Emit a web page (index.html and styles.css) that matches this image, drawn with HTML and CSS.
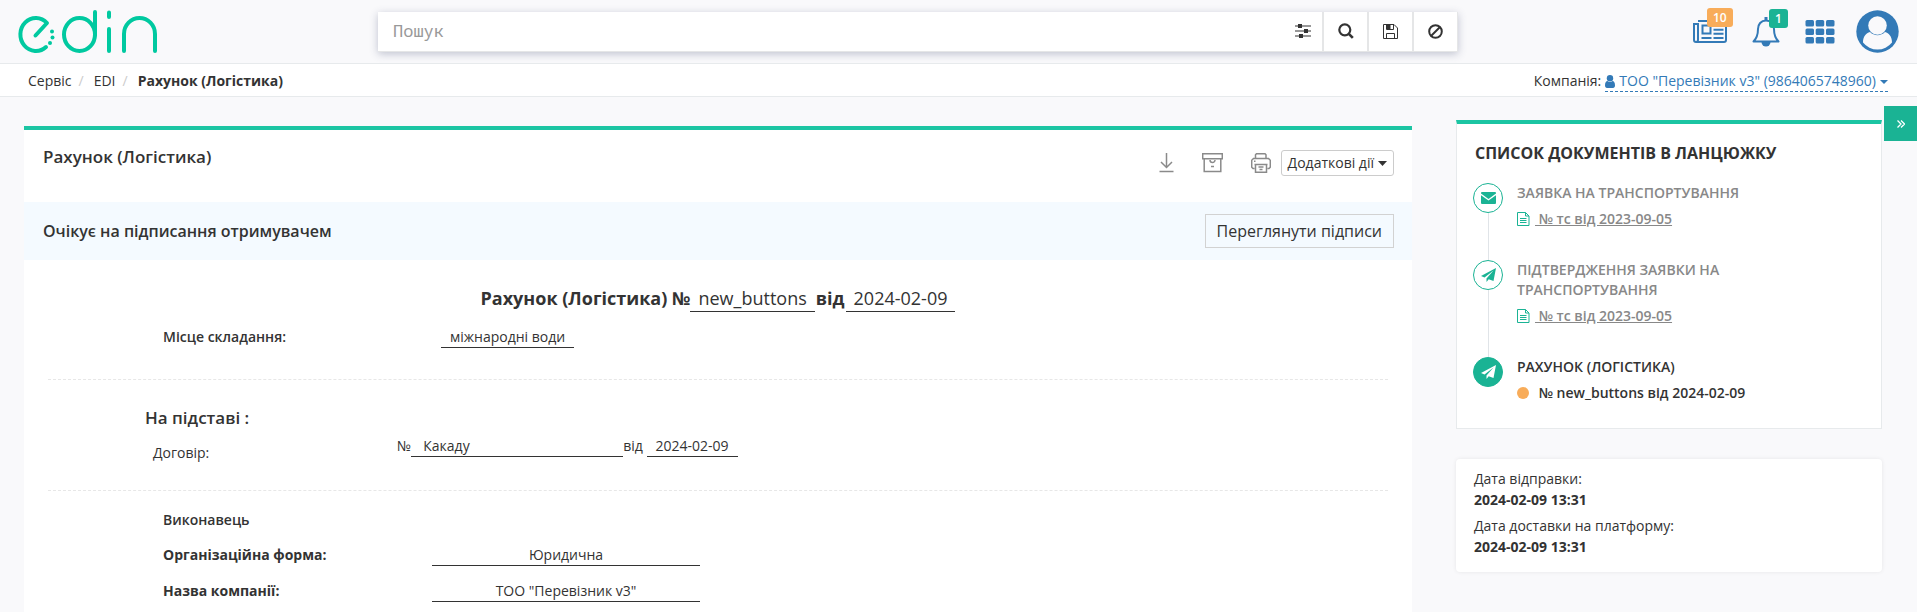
FILE: index.html
```html
<!DOCTYPE html>
<html lang="uk">
<head>
<meta charset="utf-8">
<meta name="viewport" content="width=device-width, initial-scale=1">
<title>Рахунок (Логістика)</title>
<link rel="stylesheet" href="styles.css">
</head>
<body>
<header class="topbar">
  <a class="logo" href="#" aria-label="edin">
    <svg width="140" height="44" viewBox="18 9 140 44" fill="none" stroke="#00c9a0" stroke-width="4" stroke-linecap="round" stroke-linejoin="round">
      <path d="M35.5 34.5 47 22A15.5 16.5 0 1 0 46 46"/>
      <ellipse cx="79.5" cy="33.5" rx="15.5" ry="16.5"/>
      <path d="M95 11v23M109 11.500v4.500M109 28v22M124 50V33a15.500 16 0 0 1 31 0v17"/>
      <g fill="#00c9a0" stroke="none"><circle cx="52" cy="30.500" r="2"/><circle cx="52.500" cy="36.500" r="2"/><circle cx="50" cy="42" r="2"/></g>
    </svg>
  </a>
  <form class="search">
    <input class="search-input" type="text" placeholder="Пошук" aria-label="Пошук">
    <button class="search-filter" type="button" aria-label="Фільтри">
      <svg width="16" height="14" viewBox="0 0 16 14" fill="#333"><path d="M0 1.500h16v1H0zM0 6.500h16v1H0zM0 11.500h16v1H0z"/><path d="M3 0h4v4H3zM9 5h4v4H9zM4 10h4v4H4z"/></svg>
    </button>
    <button class="search-btn" type="button" aria-label="Знайти">
      <svg width="16" height="16" viewBox="0 0 16 16" fill="none" stroke="#333" stroke-width="2.200"><circle cx="6.800" cy="6.800" r="5.500"/><path d="m10.800 10.800 4 4" stroke-width="2.600"/></svg>
    </button>
    <button class="search-btn" type="button" aria-label="Зберегти">
      <svg width="15" height="15" viewBox="0 0 15 15" fill="none" stroke="#333"><path d="M.5.500h10.500l3.500 3.500v10.500H.5z"/><path d="M3.500 14.500V9.500h8v5M3.500.500v5h7V.500"/><path d="M4 1h3.500v4H4z" fill="#333" stroke="none"/></svg>
    </button>
    <button class="search-btn" type="button" aria-label="Скинути">
      <svg width="15" height="15" viewBox="0 0 15 15" fill="none" stroke="#333" stroke-width="2"><circle cx="7.500" cy="7.500" r="6.300"/><path d="m3 12 9-9"/></svg>
    </button>
  </form>
  <nav class="tools">
    <a class="tool" href="#" aria-label="Новини">
      <svg width="34" height="24" viewBox="0 0 34 24" fill="none" stroke="#337ab7" stroke-width="2"><path d="M5 1h28v19a2 2 0 0 1-2 2H3a2 2 0 0 1-2-2V4h4v16a2 2 0 0 1-2 2"/><path d="M9.500 5.500h8v8h-8zM8.500 18h10M20.500 5.500h10M20.500 9.700h10M20.500 13.800h10M20.500 18h10"/></svg>
      <span class="badge badge-orange">10</span>
    </a>
    <a class="tool" href="#" aria-label="Сповіщення">
      <svg width="28" height="30" viewBox="0 0 28 30" fill="none" stroke="#337ab7" stroke-width="2" stroke-linejoin="round"><path d="M14 3.500c5 0 8 3.800 8 8.500 0 6 1.500 9.500 4.500 12.500h-25C4.500 21.500 6 18 6 12c0-4.700 3-8.500 8-8.500z"/><path d="M14 0v4" stroke-width="3"/><path d="M9.500 25h9a4.500 4.500 0 0 1-9 0z" fill="#337ab7" stroke="none"/></svg>
      <span class="badge badge-green">1</span>
    </a>
    <a class="tool" href="#" aria-label="Сервіси">
      <svg width="30" height="24" viewBox="0 0 30 24" fill="#337ab7"><rect x="0.500" width="8.500" height="6.500" rx="1.500"/><rect x="10.700" width="8.500" height="6.500" rx="1.500"/><rect x="21" width="8.500" height="6.500" rx="1.500"/><rect x="0.500" y="8.500" width="8.500" height="6.500" rx="1.500"/><rect x="10.700" y="8.500" width="8.500" height="6.500" rx="1.500"/><rect x="21" y="8.500" width="8.500" height="6.500" rx="1.500"/><rect x="0.500" y="17" width="8.500" height="6.500" rx="1.500"/><rect x="10.700" y="17" width="8.500" height="6.500" rx="1.500"/><rect x="21" y="17" width="8.500" height="6.500" rx="1.500"/></svg>
    </a>
    <a class="tool" href="#" aria-label="Профіль">
      <svg width="43" height="43" viewBox="0 0 43 43"><circle cx="21.500" cy="21.500" r="21.200" fill="#337ab7"/><circle cx="21.500" cy="15.500" r="9.300" fill="#f9f9fb"/><path d="M7 32.500c0-6 3-9.500 7-10.500a10.500 10.500 0 0 0 15 0c4 1 7 4.500 7 10.500a18.500 18.500 0 0 1-29 0z" fill="#f9f9fb"/></svg>
    </a>
  </nav>
</header>

<div class="subbar">
  <ol class="crumbs">
    <li><a href="#">Сервіс</a></li>
    <li><a href="#">EDI</a></li>
    <li class="current">Рахунок (Логістика)</li>
  </ol>
  <div class="company">Компанія:
    <a class="company-link" href="#">
      <svg width="10" height="13" viewBox="0 0 10 13" fill="#337ab7"><circle cx="5" cy="3.200" r="3.200"/><path d="M0 10.500C0 7.500 1 6 2.500 6a3.800 3.800 0 0 0 5 0C9 6 10 7.500 10 10.500c0 1.500-.8 2.500-2 2.500H2c-1.200 0-2-1-2-2.500z"/></svg>
      ТОО "Перевізник v3" (9864065748960)
      <svg width="8" height="13" viewBox="0 0 8 13" fill="#337ab7"><path d="M0 5h8L4 9z"/></svg>
    </a>
  </div>
</div>

<button class="side-toggle" type="button" aria-label="Згорнути">
  <svg width="8" height="8" viewBox="0 0 8 8" fill="none" stroke="#fff" stroke-width="1.300"><path d="m.5.500 3.500 3.500L.5 7.500M4 .500 7.500 4 4 7.500"/></svg>
</button>

<div class="layout">
  <main class="document">
    <div class="doc-head">
      <h1 class="doc-name">Рахунок (Логістика)</h1>
      <div class="actions">
        <button class="icon-btn" type="button" aria-label="Завантажити">
          <svg width="15" height="20" viewBox="0 0 15 20" fill="none" stroke="#8a8a8a" stroke-width="1.500"><path d="M7.500 0v14.500M2 9l5.500 5.500L13 9M.5 18.500h14"/></svg>
        </button>
        <button class="icon-btn" type="button" aria-label="Архівувати">
          <svg width="21" height="20" viewBox="0 0 21 20" fill="none" stroke="#8a8a8a" stroke-width="1.500"><path d="M.7.700h19.600v5H.7zM2.200 6v12.600h16.600V6M8 7a2.500 2.500 0 0 0 5 0M9 13.500h3"/></svg>
        </button>
        <button class="icon-btn" type="button" aria-label="Друкувати">
          <svg width="20" height="20" viewBox="0 0 20 20" fill="none" stroke="#8a8a8a" stroke-width="1.500"><path d="M4.500 5V1.700l1-1h8.500l1 1V5M3.500 15.500H2l-1.300-1.300V7.300L2.500 5.500h15l1.800 1.800v6.900L18 15.500h-1.500M3.500 11.500h13M4.500 11.500v7.800h11v-7.800M3 8.300h1.500M7.500 14h5M8.500 16.500h3"/></svg>
        </button>
        <button class="more-btn" type="button">Додаткові дії
          <svg width="9" height="5" viewBox="0 0 9 5" fill="#333"><path d="M0 0h9L4.500 5z"/></svg>
        </button>
      </div>
    </div>
    <div class="status">
      <strong class="status-text">Очікує на підписання отримувачем</strong>
      <button class="sign-btn" type="button">Переглянути підписи</button>
    </div>
    <div class="doc-body">
      <h2 class="doc-title">Рахунок (Логістика) №<span class="fill">new_buttons</span><span class="from">від</span><span class="fill">2024-02-09</span></h2>
      <section class="section place">
        <span class="label semi">Місце складання:</span>
        <span class="fill">міжнародні води</span>
      </section>
      <section class="section basis">
        <h3 class="basis-title">На підставі :</h3>
        <div class="basis-row">
          <span class="basis-label">Договір:</span>
          <div class="basis-value">№<span class="fill wide">Какаду</span>від <span class="fill">2024-02-09</span></div>
        </div>
      </section>
      <section class="party">
        <h4 class="party-title">Виконавець</h4>
        <div class="party-row"><span class="label bold">Організаційна форма:</span><span class="value">Юридична</span></div>
        <div class="party-row"><span class="label bold">Назва компанії:</span><span class="value">ТОО "Перевізник v3"</span></div>
      </section>
    </div>
  </main>

  <aside class="side">
    <section class="chain">
      <h2 class="chain-title">СПИСОК ДОКУМЕНТІВ В ЛАНЦЮЖКУ</h2>
      <ul class="chain-list">
        <li class="chain-item">
          <span class="dot"><svg width="15" height="12" viewBox="0 0 15 12" fill="#1ab394"><path d="M1 0h13q1 0 1 1v.600L7.500 7 0 1.600V1q0-1 1-1z"/><path d="M0 3.200v7.600Q0 12 1 12h13q1 0 1-1.200V3.200L7.500 8.500z"/></svg></span>
          <div class="chain-text">
            <h3 class="chain-name">ЗАЯВКА НА ТРАНСПОРТУВАННЯ</h3>
            <a class="chain-link" href="#"><svg width="13" height="14" viewBox="0 0 13 14" fill="none" stroke="#1ab394"><path d="M.5.500h8l3.500 3.500v9.500H.5zM8.500.500v3.500H12M3 6.500h6.500M3 8.500h6.500M3 10.500h6.500"/></svg><span class="link-text">&nbsp;№ тс від 2023-09-05</span></a>
          </div>
        </li>
        <li class="chain-item">
          <span class="dot"><svg width="15" height="14" viewBox="0 0 15 14" fill="#1ab394"><path d="M15 0 0 8l3.500 1.600L12.500 2.500 5.500 10.500V14l2.200-2.700L12.500 13z"/></svg></span>
          <div class="chain-text">
            <h3 class="chain-name">ПІДТВЕРДЖЕННЯ ЗАЯВКИ НА ТРАНСПОРТУВАННЯ</h3>
            <a class="chain-link" href="#"><svg width="13" height="14" viewBox="0 0 13 14" fill="none" stroke="#1ab394"><path d="M.5.500h8l3.500 3.500v9.500H.5zM8.500.500v3.500H12M3 6.500h6.500M3 8.500h6.500M3 10.500h6.500"/></svg><span class="link-text">&nbsp;№ тс від 2023-09-05</span></a>
          </div>
        </li>
        <li class="chain-item active">
          <span class="dot"><svg width="15" height="14" viewBox="0 0 15 14" fill="#fff"><path d="M15 0 0 8l3.500 1.600L12.500 2.500 5.500 10.500V14l2.200-2.700L12.500 13z"/></svg></span>
          <div class="chain-text">
            <h3 class="chain-name">РАХУНОК (ЛОГІСТИКА)</h3>
            <div class="chain-link"><svg width="13" height="12" viewBox="0 0 13 12" fill="#f8ac59"><circle cx="6" cy="6" r="6"/></svg><span class="link-text">&nbsp;№ new_buttons від 2024-02-09</span></div>
          </div>
        </li>
      </ul>
    </section>
    <dl class="dates">
      <dt>Дата відправки:</dt><dd>2024-02-09 13:31</dd>
      <dt>Дата доставки на платформу:</dt><dd>2024-02-09 13:31</dd>
    </dl>
  </aside>
</div>
</body>
</html>
```

FILE: styles.css
```css
*, *::before, *::after { box-sizing: border-box; }
body {
  margin: 0;
  background: #f9f9fb;
  color: #333;
  font: 14px/20px "Open Sans", sans-serif;
  position: relative;
}
h1, h2, h3, h4, ul, ol, dl, dd { margin: 0; padding: 0; }
ul, ol { list-style: none; }
a { color: inherit; text-decoration: none; }
button { font: inherit; color: inherit; background: none; border: 0; padding: 0; cursor: pointer; }
svg { display: block; flex: none; }

.topbar {
  display: grid;
  grid-template-columns: 378px minmax(0, 1fr) 459px;
  align-items: center;
  height: 64px;
  border-bottom: 1px solid #e7eaec;
}
.logo { padding-left: 18px; }
.search {
  display: flex;
  height: 40px;
  background: #fff;
  border: 1px solid #e5e6e7;
  border-width: 0 1px 1px 0;
  box-shadow: 0 2px 8px rgba(60, 70, 110, .3);
}
.search-input {
  flex: 1;
  min-width: 0;
  border: 0;
  outline: 0;
  padding: 0 15px;
  background: none;
  font: 17px/24px "Noto Sans Mono", "DejaVu Sans Mono", monospace;
}
.search-input::placeholder { color: #999; opacity: 1; }
.search-filter, .search-btn { display: grid; place-items: center; }
.search-filter { width: 38px; }
.search-btn { width: 45px; border-left: 2px solid #e5e6e7; }

.tools { display: flex; align-items: center; justify-content: flex-end; gap: 25px; padding-right: 18px; }
.tool { position: relative; }
.tool:last-child { margin-left: -4px; }
.badge {
  position: absolute;
  top: -12px;
  left: 14px;
  padding: 0 6px;
  border-radius: 3px;
  color: #fff;
  font-size: 12px;
  font-weight: 600;
  line-height: 19px;
}
.badge-orange { background: #f8ac59; }
.badge-green { background: #1ab394; top: -8px; left: 17px; }

.subbar {
  display: flex;
  justify-content: space-between;
  padding: 7px 29px 4px 28px;
  background: #fff;
  border-bottom: 1px solid #e7eaec;
}
.crumbs { display: flex; }
.crumbs li + li::before { content: "/"; padding: 0 10px 0 7px; font-weight: 400; color: #ccc; }
.current { font-weight: 700; }
.company { display: flex; gap: 4px; }
.company-link {
  display: flex;
  align-items: center;
  gap: 4px;
  color: #337ab7;
  border-bottom: 1px dashed #337ab7;
}

.side-toggle {
  position: absolute;
  top: 106px;
  right: 0;
  width: 33px;
  height: 35px;
  display: grid;
  place-items: center;
  background: #1ab394;
}

.layout {
  display: grid;
  grid-template-columns: minmax(0, 1fr) 426px;
  gap: 44px;
  align-items: start;
  padding: 23px 35px 0 24px;
}
.document { margin-top: 6px; background: #fff; border-top: 4px solid #1cc5a3; }
.doc-head { display: flex; justify-content: space-between; padding: 16px 18px 26px 19px; }
.doc-name { font-size: 17px; font-weight: 600; line-height: 22px; }
.actions { display: flex; align-items: center; padding-top: 4px; }
.icon-btn { display: grid; justify-items: center; margin-right: 28px; }
.icon-btn + .icon-btn + .icon-btn { margin-right: 10px; }
.more-btn {
  display: flex;
  align-items: center;
  gap: 4px;
  height: 26px;
  padding: 0 6px;
  border: 1px solid #ccc;
  border-radius: 3px;
}
.status {
  display: flex;
  align-items: center;
  justify-content: space-between;
  padding: 12px 18px 12px 19px;
  background: #f4faff;
}
.doc-head { min-height: 72px; }
.status-text { font-size: 16px; font-weight: 600; line-height: 22px; }
.sign-btn { height: 34px; padding: 0 11px; border: 1px solid #d2d2d2; font-size: 16px; line-height: 22px; }

.doc-body { padding: 26px 24px 0; }
.fill { display: inline-block; padding: 0 9px; border-bottom: 1px solid #333; font-weight: 400; }
.doc-title { text-align: center; font-size: 18px; line-height: 25px; font-weight: 700; }
.doc-title .fill { padding: 0 8px; }
.from { padding: 0 1px; }
.section { border-bottom: 1px dashed #e7e7e7; }
.place { display: flex; padding: 15px 0 31px 115px; }
.label { width: 278px; }
.semi { font-weight: 600; }
.bold { font-weight: 700; }
.basis { padding: 25px 0 27px 97px; }
.basis-title { font-size: 17px; font-weight: 600; line-height: 25px; }
.basis-row { display: flex; padding-top: 6px; }
.basis-label { width: 252px; padding: 7px 0 0 8px; }
.wide { width: 212px; padding-left: 12px; }
.party { padding: 19px 0 0 115px; }
.party-title { font-size: 14px; font-weight: 600; padding-bottom: 15px; }
.party-row { display: flex; padding-bottom: 15px; }
.party-row .label { width: 269px; }
.value { width: 268px; text-align: center; border-bottom: 1px solid #333; }

.chain {
  padding: 19px 18px 25px 16px;
  background: #fff;
  border: 1px solid #e7eaec;
  border-top: 4px solid #1cc5a3;
}
.chain-title { font-size: 16px; line-height: 20px; font-weight: 700; padding: 0 0 20px 2px; }
.chain-item { position: relative; display: flex; gap: 14px; padding-bottom: 31px; color: #888; }
.chain-item::before {
  content: "";
  position: absolute;
  left: 15px;
  top: 30px;
  bottom: 0;
  width: 1px;
  background: #e0e4e8;
}
.dot {
  display: grid;
  place-items: center;
  flex: none;
  width: 30px;
  height: 30px;
  border: 1px solid #1ab394;
  border-radius: 50%;
}
.chain-text { max-width: 260px; }
.chain-name { font-size: 14px; font-weight: 600; line-height: 20px; }
.chain-link { display: flex; align-items: center; gap: 5px; padding-top: 6px; font-weight: 600; }
a .link-text { text-decoration: underline; }
.active { color: #333; padding-bottom: 0; }
.active::before { display: none; }
.active .dot { background: #1ab394; }

.dates {
  margin-top: 30px;
  padding: 9px 18px 10px;
  background: #fff;
  border-radius: 4px;
  box-shadow: 0 0 4px rgba(0, 0, 0, .08);
  line-height: 21px;
}
.dates dd { font-weight: 700; padding-bottom: 5px; }
```
